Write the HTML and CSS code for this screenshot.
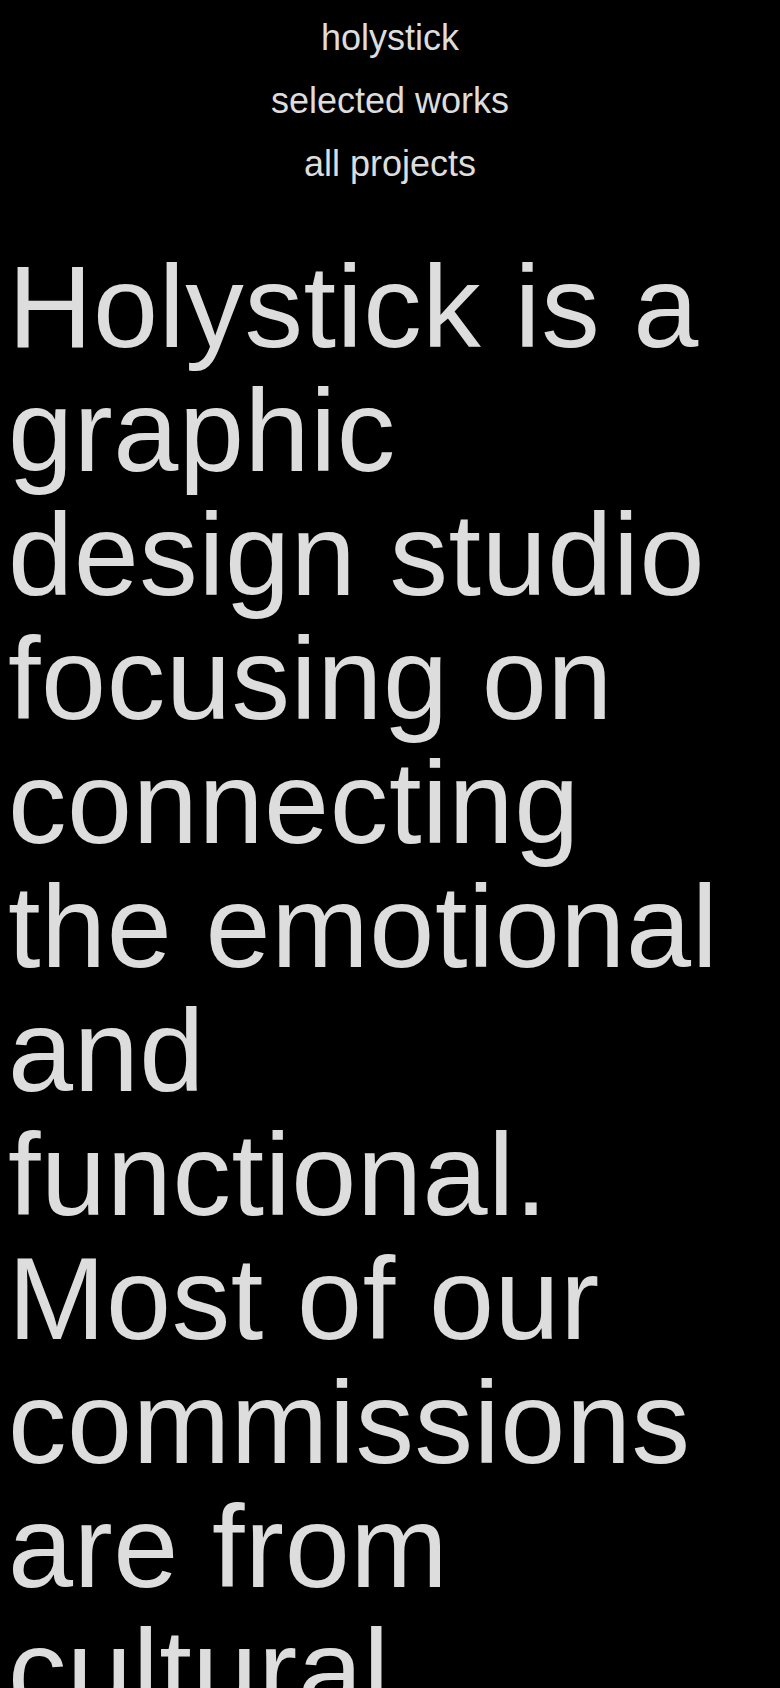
FILE: index.html
```html
<!DOCTYPE html>
<html lang="en">
<head>
<meta charset="utf-8">
<title>Holystick</title>
<link rel="stylesheet" href="styles.css">
</head>
<body>
<div class="page">
  <nav class="nav">
    <a class="nav-link" href="#">holystick</a>
    <a class="nav-link" href="#">selected works</a>
    <a class="nav-link" href="#">all projects</a>
  </nav>
  <main>
    <h1 class="intro">Holystick is a graphic design studio focusing on connecting the emotional and functional. Most of our commissions are from cultural institutions, artists and publishers.</h1>
  </main>
</div>
</body>
</html>
```
FILE: styles.css
```css
html, body {
  margin: 0;
  background: #000;
}
body {
  font-family: "Liberation Sans", Arial, Helvetica, sans-serif;
  color: #dddddd;
}
.page {
  padding: 6px 8px 40px;
}
.nav {
  display: flex;
  flex-direction: column;
  align-items: center;
}
.nav-link {
  display: block;
  font-size: 36px;
  line-height: 63px;
  color: #dddddd;
  text-decoration: none;
}
.intro {
  margin: 50px 0 0;
  font-size: 117px;
  line-height: 124px;
  font-weight: 400;
  letter-spacing: 0.6px;
}
```
